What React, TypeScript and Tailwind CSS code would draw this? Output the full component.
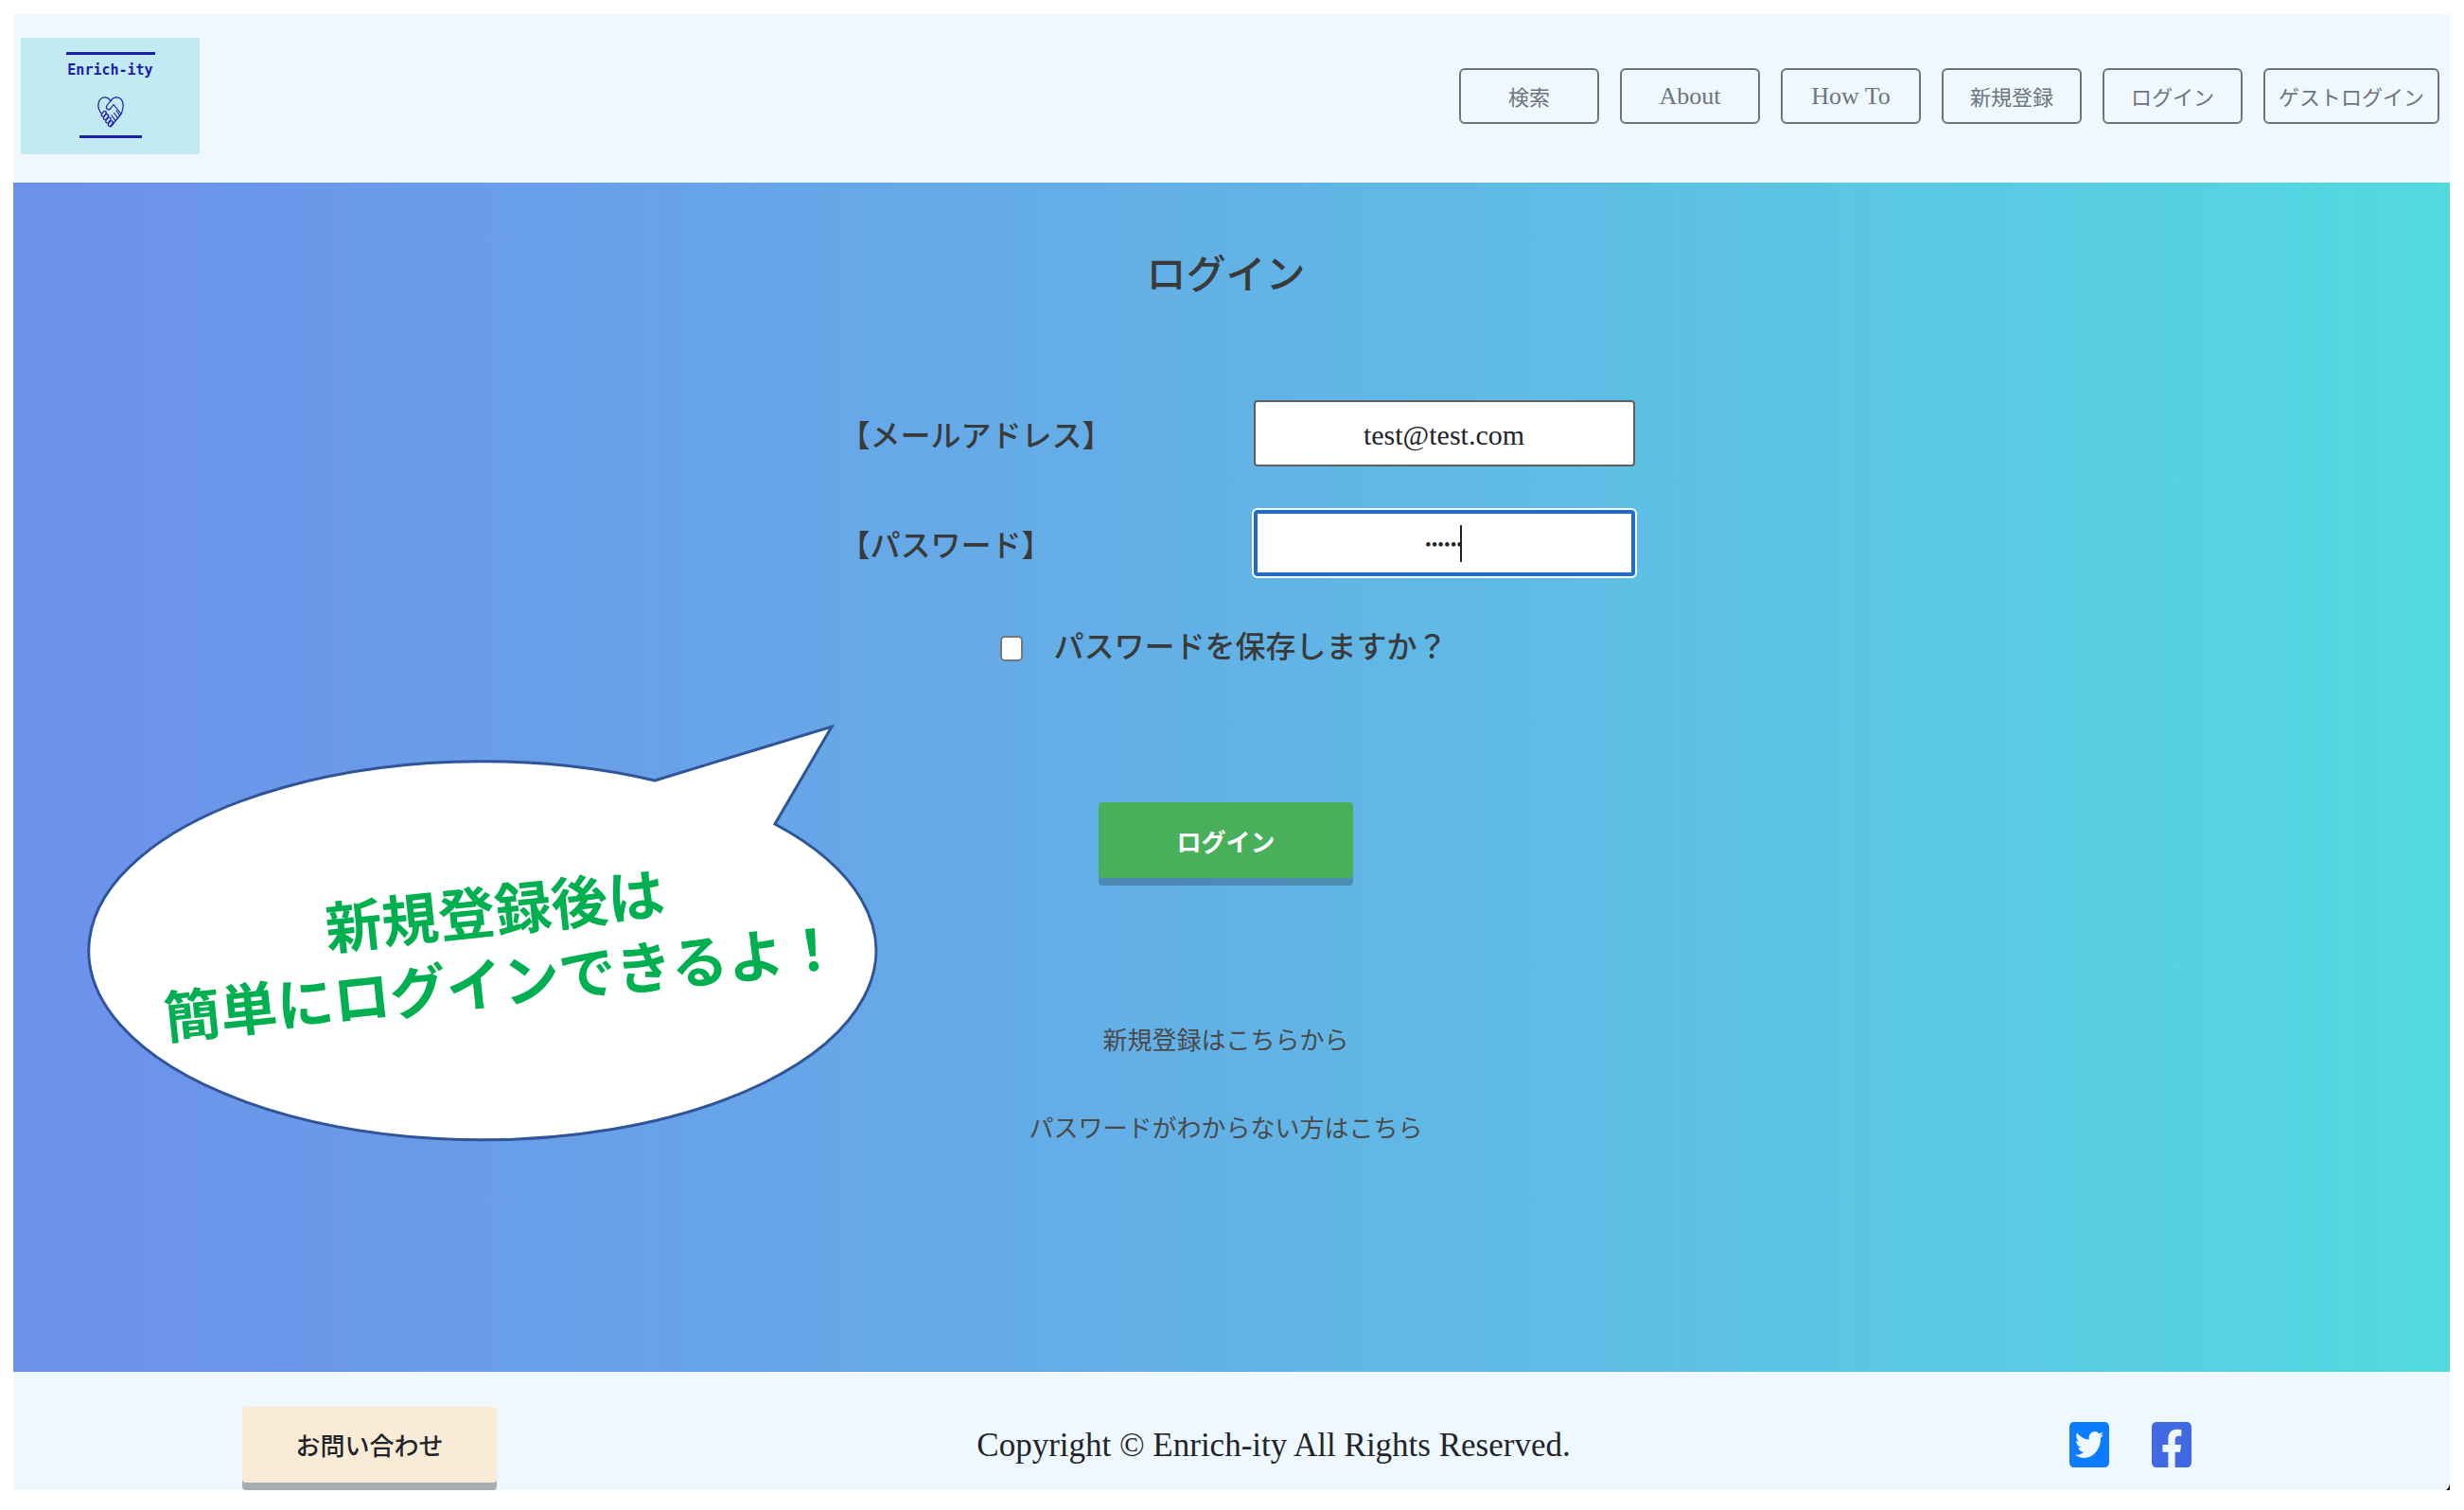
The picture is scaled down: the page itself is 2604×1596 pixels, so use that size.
import { FaFacebookSquare, FaTwitterSquare } from "react-icons/fa";

const navItems = [
  { label: "検索", latin: false },
  { label: "About", latin: true },
  { label: "How To", latin: true },
  { label: "新規登録", latin: false },
  { label: "ログイン", latin: false },
  { label: "ゲストログイン", latin: false },
];

function Logo() {
  return (
    <a
      href="#"
      aria-label="Enrich-ity"
      className="flex h-[123px] w-[189px] flex-col items-center bg-[#c2eaf2] pt-[15px] text-[#1c1cae]"
    >
      <span className="h-[3px] w-[94px] bg-current" />
      <span className="mt-1 font-['DejaVu_Sans_Mono',monospace] text-[15px] leading-6 font-bold">Enrich-ity</span>
      <svg
        viewBox="0 0 28 33"
        className="mt-4 h-[33px] w-7"
        fill="none"
        stroke="currentColor"
        strokeWidth="1.2"
        strokeLinecap="round"
        strokeLinejoin="round"
      >
        <path d="M14 5C12.500 2 10 .8 7.500 .8C3.500 .8 .8 4.500 .8 9.500C.8 13 2.500 16 4.500 18.500" />
        <path d="M25 18.500C26.500 15.500 27.200 12.500 27.200 9.500C27.200 4.500 24.500 .8 20.500 .8C18 .8 15.500 2 14 4.500L10 9.500C8 12.500 11.500 15.500 14 12.500L17 8.500L25 18.500L14 32" />
        <path d="M20 15L23.500 20M17.500 17.500L21.500 23M15 20L19 25.500" />
        <ellipse cx="6.800" cy="18.200" rx="1.800" ry="3.200" transform="rotate(38 6.800 18.200)" />
        <ellipse cx="9" cy="21.600" rx="1.800" ry="3.400" transform="rotate(38 9 21.600)" />
        <ellipse cx="11.400" cy="25" rx="1.800" ry="3.400" transform="rotate(38 11.400 25)" />
        <ellipse cx="13.800" cy="28.400" rx="1.800" ry="3.200" transform="rotate(38 13.800 28.400)" />
      </svg>
      <span className="mt-[8px] h-[3px] w-[66px] bg-current" />
    </a>
  );
}

function Header() {
  return (
    <header className="flex items-start justify-between bg-[#f0f8ff] pt-[25px] pr-[11px] pb-[30px] pl-2">
      <Logo />
      <nav className="mt-8 flex gap-[22px]">
        {navItems.map((item) => (
          <button
            key={item.label}
            type="button"
            className={
              item.latin
                ? "h-[59px] min-w-[148px] rounded-md border-2 border-[#6c757d] px-[14px] font-['Liberation_Serif',serif] text-[26px] text-[#6c757d]"
                : "h-[59px] min-w-[148px] rounded-md border-2 border-[#6c757d] px-[14px] text-[22px] text-[#6c757d]"
            }
          >
            {item.label}
          </button>
        ))}
      </nav>
    </header>
  );
}

function Callout() {
  return (
    <aside className="absolute top-[571px] left-[78px] h-[444px] w-[840px]">
      <svg viewBox="0 0 840 444" className="h-full w-full" fill="#fff" stroke="#2f5597" strokeWidth="3">
        <path d="M600 61L787 4L727 107A416 200 0 1 1 600 61Z" />
      </svg>
      <p className="absolute top-[157px] left-[75px] -rotate-6 text-center text-[60px] leading-[76px] font-bold whitespace-nowrap text-[#00b050]">
        新規登録後は
        <br />
        簡単にログインできるよ！
      </p>
    </aside>
  );
}

function LoginForm() {
  return (
    <form className="flex flex-col items-center" onSubmit={(e) => e.preventDefault()}>
      <div className="grid w-[864px] grid-cols-[1fr_403px] items-center gap-y-[46px] pl-6">
        <label htmlFor="email" className="text-[32px] leading-10 font-medium">
          【メールアドレス】
        </label>
        <input
          id="email"
          type="email"
          defaultValue="test@test.com"
          className="h-[70px] w-full rounded border-2 border-[#5f5f5f] bg-white pt-1 text-center font-['Liberation_Serif',serif] text-[30px] text-[#212529]"
        />
        <label htmlFor="password" className="text-[32px] leading-10 font-medium">
          【パスワード】
        </label>
        <div className="relative">
          <input
            id="password"
            type="password"
            defaultValue="secret"
            className="block h-[70px] w-full rounded border-4 border-[#1f6bd2] bg-white pt-1 text-center font-['Liberation_Serif',serif] text-[19px] text-[#212529] caret-transparent ring-2 ring-white outline-none"
          />
          <span className="absolute top-4 left-[218px] h-[39px] w-[2px] bg-[#212529]" />
        </div>
      </div>
      <div className="mt-[52px] flex items-center gap-8 pr-1">
        <input
          id="remember"
          type="checkbox"
          className="mt-2 h-[27px] w-6 appearance-none rounded-[5px] border-2 border-[#767676] bg-white"
        />
        <label htmlFor="remember" className="text-[32px] leading-10 font-medium">
          パスワードを保存しますか？
        </label>
      </div>
      <button
        type="submit"
        className="mt-[147px] h-20 w-[269px] rounded bg-[#48b05b] text-[26px] font-bold text-white shadow-[0_8px_0_rgba(0,0,0,0.22)]"
      >
        ログイン
      </button>
    </form>
  );
}

export default function App() {
  return (
    <div className="bg-white px-[14px] pt-[15px] pb-[21px] font-['Noto_Sans_CJK_JP',sans-serif] text-[#212529]">
      <div className="mr-px">
        <Header />
        <main className="relative flex min-h-[1257px] flex-col items-center bg-linear-to-r from-[#6d90eb] via-[#62b2e6] to-[#53d9e0] pt-[62px] pr-3 text-[#3a3a3a]">
          <h1 className="mb-[104px] text-[42px] leading-[64px] font-medium">ログイン</h1>
          <LoginForm />
          <div className="mt-[150px] flex flex-col items-center gap-[53px] text-[26px] leading-10 text-[#4a4a4a]">
            <a href="#">新規登録はこちらから</a>
            <a href="#">パスワードがわからない方はこちら</a>
          </div>
          <Callout />
        </main>
        <footer className="relative flex h-[125px] items-center justify-between overflow-hidden bg-[#f0f8ff] pr-[273px] pl-[242px]">
          <button
            type="button"
            className="mt-7 h-20 w-[269px] rounded bg-[#faebd7] text-[26px] font-medium shadow-[0_8px_0_rgba(0,0,0,0.3)]"
          >
            お問い合わせ
          </button>
          <small className="mt-8 font-['Liberation_Serif',serif] text-[35px]">
            Copyright © Enrich-ity All Rights Reserved.
          </small>
          <div className="mt-7 flex gap-[45px] pl-5">
            <a href="#" aria-label="Twitter" className="text-[#0a7cff]">
              <FaTwitterSquare viewBox="0 32 448 448" preserveAspectRatio="none" className="h-12 w-[42px]" />
            </a>
            <a href="#" aria-label="Facebook" className="text-[#4169e1]">
              <FaFacebookSquare viewBox="0 32 448 448" preserveAspectRatio="none" className="h-12 w-[42px]" />
            </a>
          </div>
          <svg viewBox="0 0 4 8" className="absolute right-0 bottom-0 h-2 w-1" fill="#000">
            <path d="M4 0Q4 5 0 8H4Z" />
          </svg>
        </footer>
      </div>
    </div>
  );
}
